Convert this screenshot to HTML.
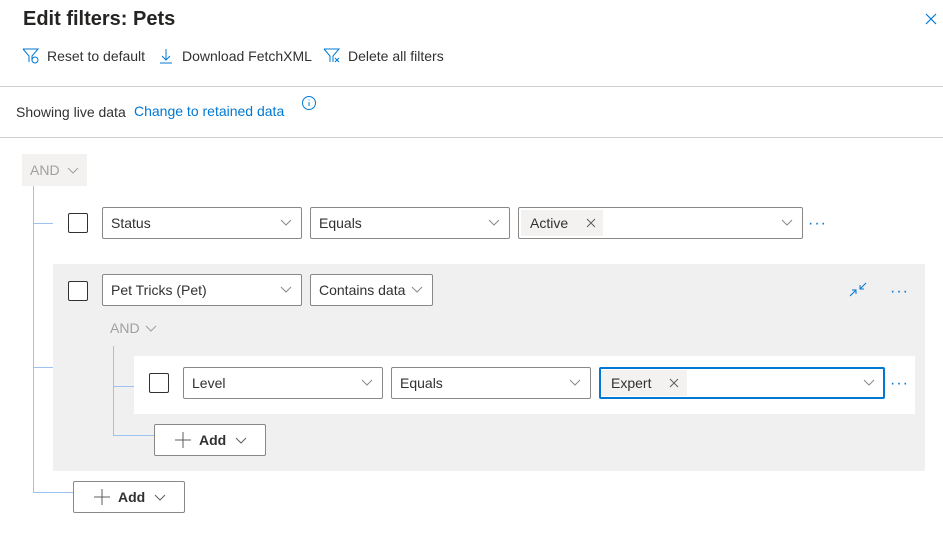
<!DOCTYPE html>
<html><head><meta charset="utf-8"><style>
*{box-sizing:border-box;margin:0;padding:0}
body{width:943px;height:548px;background:#fff;font-family:"Segoe UI","Liberation Sans",sans-serif;color:#323130;position:relative;overflow:hidden;font-size:14px}
.a{position:absolute}
.dd{position:absolute;border:1px solid #8a8886;background:#fff;border-radius:2px;height:32px;font-size:14px;line-height:30px;padding-left:8px;color:#323130}
.dd svg{position:absolute;right:9px;top:11px}
.cb{position:absolute;width:20px;height:20px;border:1px solid #323130;border-radius:2px;background:#fff}
.tag{position:absolute;background:#f3f2f1;height:26px;top:2px;left:2px;line-height:26px;padding-left:9px;font-size:14px;color:#323130}
.line{position:absolute;background:#9cc3f0}
.dots{position:absolute;color:#0078d4;font-size:16px;letter-spacing:1px;line-height:10px}
.btn{position:absolute;border:1px solid #8a8886;background:#fff;height:32px;border-radius:2px;font-weight:600;font-size:14px;line-height:30px}
</style></head><body>
<div class="a" style="left:23px;top:8px;font-size:20px;font-weight:600;color:#252423">Edit filters: Pets</div>
<svg class="a" style="left:925px;top:13px" width="12" height="12"><path d="M1 1L11 11M11 1L1 11" stroke="#0078d4" stroke-width="1.2"/></svg>
<svg class="a" style="left:22px;top:48px" width="18" height="16"><path d="M1 1H16L10 8V13M1 1L7 8V14" fill="none" stroke="#0078d4" stroke-width="1"/><circle cx="13" cy="12" r="3" fill="none" stroke="#0078d4"/></svg>
<div class="a" style="left:47px;top:48px">Reset to default</div>
<svg class="a" style="left:159px;top:48px" width="14" height="16"><path d="M7 1V12M3 8L7 12L11 8M1 15H13" fill="none" stroke="#0078d4"/></svg>
<div class="a" style="left:182px;top:48px">Download FetchXML</div>
<svg class="a" style="left:323px;top:48px" width="20" height="16"><path d="M1 1H16L10 8V14M1 1L7 8V14" fill="none" stroke="#0078d4"/><path d="M12 10L16 14M16 10L12 14" stroke="#0078d4"/></svg>
<div class="a" style="left:348px;top:48px">Delete all filters</div>
<div class="a" style="left:0;top:86px;width:943px;height:1px;background:#d2d0ce"></div>
<div class="a" style="left:16px;top:104px">Showing live data</div>
<div class="a" style="left:134px;top:103px;color:#0078d4">Change to retained data</div>
<svg class="a" style="left:301px;top:95px" width="16" height="16"><circle cx="8" cy="8" r="6.5" fill="none" stroke="#0078d4"/><path d="M8 7V11M8 4.5V5.5" stroke="#0078d4"/></svg>
<div class="a" style="left:0;top:137px;width:943px;height:1px;background:#d2d0ce"></div>
<div class="a" style="left:22px;top:154px;width:65px;height:32px;background:#f3f2f1;color:#a19f9d;line-height:32px;padding-left:8px">AND <svg width="12" height="8" style="margin-left:4px"><path d="M1 1L6 6L11 1" fill="none" stroke="#a19f9d"/></svg></div>
<div class="line" style="left:33px;top:186px;width:1px;height:307px"></div>
<div class="line" style="left:33px;top:223px;width:20px;height:1px"></div>
<div class="line" style="left:33px;top:367px;width:20px;height:1px"></div>
<div class="line" style="left:33px;top:492px;width:40px;height:1px"></div>
<div class="cb" style="left:68px;top:213px"></div>
<div class="dd" style="left:102px;top:207px;width:200px">Status<svg width="12" height="8"><path d="M1 1L6 6L11 1" fill="none" stroke="#8a8886"/></svg></div>
<div class="dd" style="left:310px;top:207px;width:200px">Equals<svg width="12" height="8"><path d="M1 1L6 6L11 1" fill="none" stroke="#8a8886"/></svg></div>
<div class="dd" style="left:518px;top:207px;width:285px"><div class="tag" style="width:82px">Active<svg width="10" height="10" style="position:absolute;left:65px;top:8px"><path d="M1 1L9 9M9 1L1 9" stroke="#605e5c"/></svg></div><svg width="12" height="8"><path d="M1 1L6 6L11 1" fill="none" stroke="#8a8886"/></svg></div>
<div class="dots" style="left:808px;top:219px">···</div>
<div class="a" style="left:53px;top:264px;width:872px;height:207px;background:#f0f0f0"></div>
<div class="cb" style="left:68px;top:281px"></div>
<div class="dd" style="left:102px;top:274px;width:200px">Pet Tricks (Pet)<svg width="12" height="8"><path d="M1 1L6 6L11 1" fill="none" stroke="#8a8886"/></svg></div>
<div class="dd" style="left:310px;top:274px;width:123px">Contains data<svg width="12" height="8"><path d="M1 1L6 6L11 1" fill="none" stroke="#8a8886"/></svg></div>
<svg class="a" style="left:849px;top:282px" width="18" height="16"><path d="M1 14L7 8M3 8H7V12M17 1L11 7M11 3V7H15" fill="none" stroke="#0078d4"/></svg>
<div class="dots" style="left:890px;top:287px">···</div>
<div class="a" style="left:110px;top:320px;color:#a19f9d">AND <svg width="12" height="8" style="margin-left:2px"><path d="M1 1L6 6L11 1" fill="none" stroke="#a19f9d"/></svg></div>
<div class="line" style="left:113px;top:346px;width:1px;height:90px"></div>
<div class="line" style="left:113px;top:386px;width:21px;height:1px"></div>
<div class="line" style="left:113px;top:435px;width:41px;height:1px"></div>
<div class="a" style="left:134px;top:356px;width:781px;height:58px;background:#fff"></div>
<div class="cb" style="left:149px;top:373px"></div>
<div class="dd" style="left:183px;top:367px;width:200px">Level<svg width="12" height="8"><path d="M1 1L6 6L11 1" fill="none" stroke="#8a8886"/></svg></div>
<div class="dd" style="left:391px;top:367px;width:200px">Equals<svg width="12" height="8"><path d="M1 1L6 6L11 1" fill="none" stroke="#8a8886"/></svg></div>
<div class="dd" style="left:599px;top:367px;width:286px;border:2px solid #0078d4;line-height:28px"><div class="tag" style="width:85px;top:1px;left:1px">Expert<svg width="10" height="10" style="position:absolute;left:67px;top:8px"><path d="M1 1L9 9M9 1L1 9" stroke="#605e5c"/></svg></div><svg width="12" height="8" style="top:10px;right:8px"><path d="M1 1L6 6L11 1" fill="none" stroke="#8a8886"/></svg></div>
<div class="dots" style="left:890px;top:379px">···</div>
<div class="btn" style="left:154px;top:424px;width:112px"><svg width="16" height="16" style="position:absolute;left:20px;top:7px"><path d="M8 0V16M0 8H16" stroke="#605e5c"/></svg><span style="position:absolute;left:44px">Add</span><svg width="12" height="8" style="position:absolute;left:80px;top:12px"><path d="M1 1L6 6L11 1" fill="none" stroke="#605e5c"/></svg></div>
<div class="btn" style="left:73px;top:481px;width:112px"><svg width="16" height="16" style="position:absolute;left:20px;top:7px"><path d="M8 0V16M0 8H16" stroke="#605e5c"/></svg><span style="position:absolute;left:44px">Add</span><svg width="12" height="8" style="position:absolute;left:80px;top:12px"><path d="M1 1L6 6L11 1" fill="none" stroke="#605e5c"/></svg></div>
</body></html>
